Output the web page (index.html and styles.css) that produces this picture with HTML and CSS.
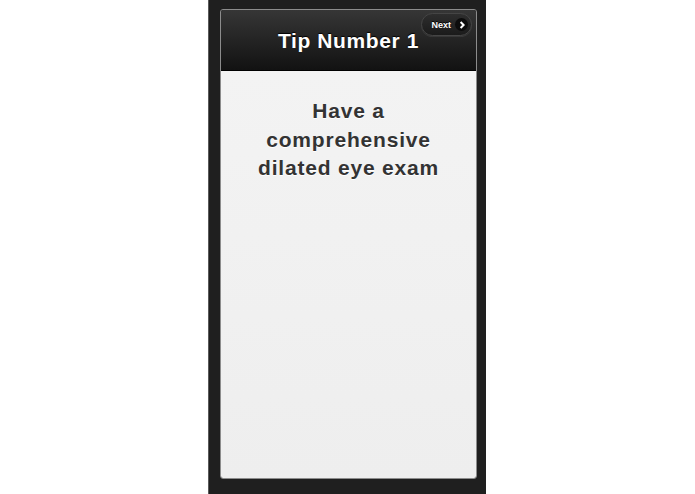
FILE: index.html
```html
<!DOCTYPE html>
<html>
<head>
<meta charset="utf-8">
<link rel="stylesheet" href="styles.css">
</head>
<body>
<div class="frame">
  <div class="panel">
    <header class="bar">
      <h1 class="title">Tip Number 1</h1>
      <a class="next">
        <span class="next-label">Next</span>
        <span class="next-icon"><svg width="12" height="12" viewBox="0 0 12 12"><path d="M4.6 3 L7.6 6 L4.6 9" fill="none" stroke="#fff" stroke-width="2"/></svg></span>
      </a>
    </header>
    <main class="content">
      <p class="tip">Have a comprehensive dilated eye exam</p>
    </main>
  </div>
</div>
</body>
</html>
```
FILE: styles.css
```css
html, body {
  margin: 0;
  padding: 0;
  background: #ffffff;
  height: 100%;
}
body {
  display: flex;
  justify-content: center;
  padding-right: 1px;
  font-family: "Liberation Sans", Arial, sans-serif;
}
.frame {
  width: 278px;
  height: 494px;
  box-sizing: border-box;
  background: #1f1f1f;
  border-left: 1px solid #5a5a5a;
  padding: 9px 9px 15px 11px;
  display: flex;
}
.panel {
  flex: 1;
  display: flex;
  flex-direction: column;
  border: 1px solid #8c8c8c;
  border-radius: 3px;
  overflow: hidden;
}
.bar {
  position: relative;
  height: 60px;
  flex: none;
  background: linear-gradient(#363636, #121212);
  display: flex;
  align-items: center;
  justify-content: center;
  border-bottom: 1px solid #000;
}
.title {
  margin: 0;
  color: #fff;
  font-size: 21px;
  font-weight: bold;
  letter-spacing: 0.6px;
  text-shadow: 0 -1px 1px #000;
  padding-top: 1px;
}
.next {
  position: absolute;
  top: 3px;
  right: 4px;
  height: 21px;
  display: flex;
  align-items: center;
  gap: 4px;
  padding: 0 3px 0 9px;
  border: 1px solid #454545;
  border-radius: 12px;
  background: linear-gradient(#2e2e2e, #1b1b1b);
  box-shadow: 0 1px 0 rgba(255,255,255,0.08);
}
.next-label {
  color: #fff;
  font-size: 9px;
  font-weight: bold;
  text-shadow: 0 -1px 0 #000;
}
.next-icon {
  width: 13px;
  height: 13px;
  border-radius: 50%;
  background: #0c0c0c;
  display: flex;
  align-items: center;
  justify-content: center;
}
.content {
  flex: 1;
  background: linear-gradient(#f3f3f3, #eeeeee);
  padding-top: 26px;
}
.tip {
  margin: 0 auto;
  max-width: 200px;
  text-align: center;
  color: #333;
  font-size: 21px;
  font-weight: bold;
  line-height: 28.5px;
  letter-spacing: 0.8px;
  text-shadow: 0 1px 0 #fff;
}
```
